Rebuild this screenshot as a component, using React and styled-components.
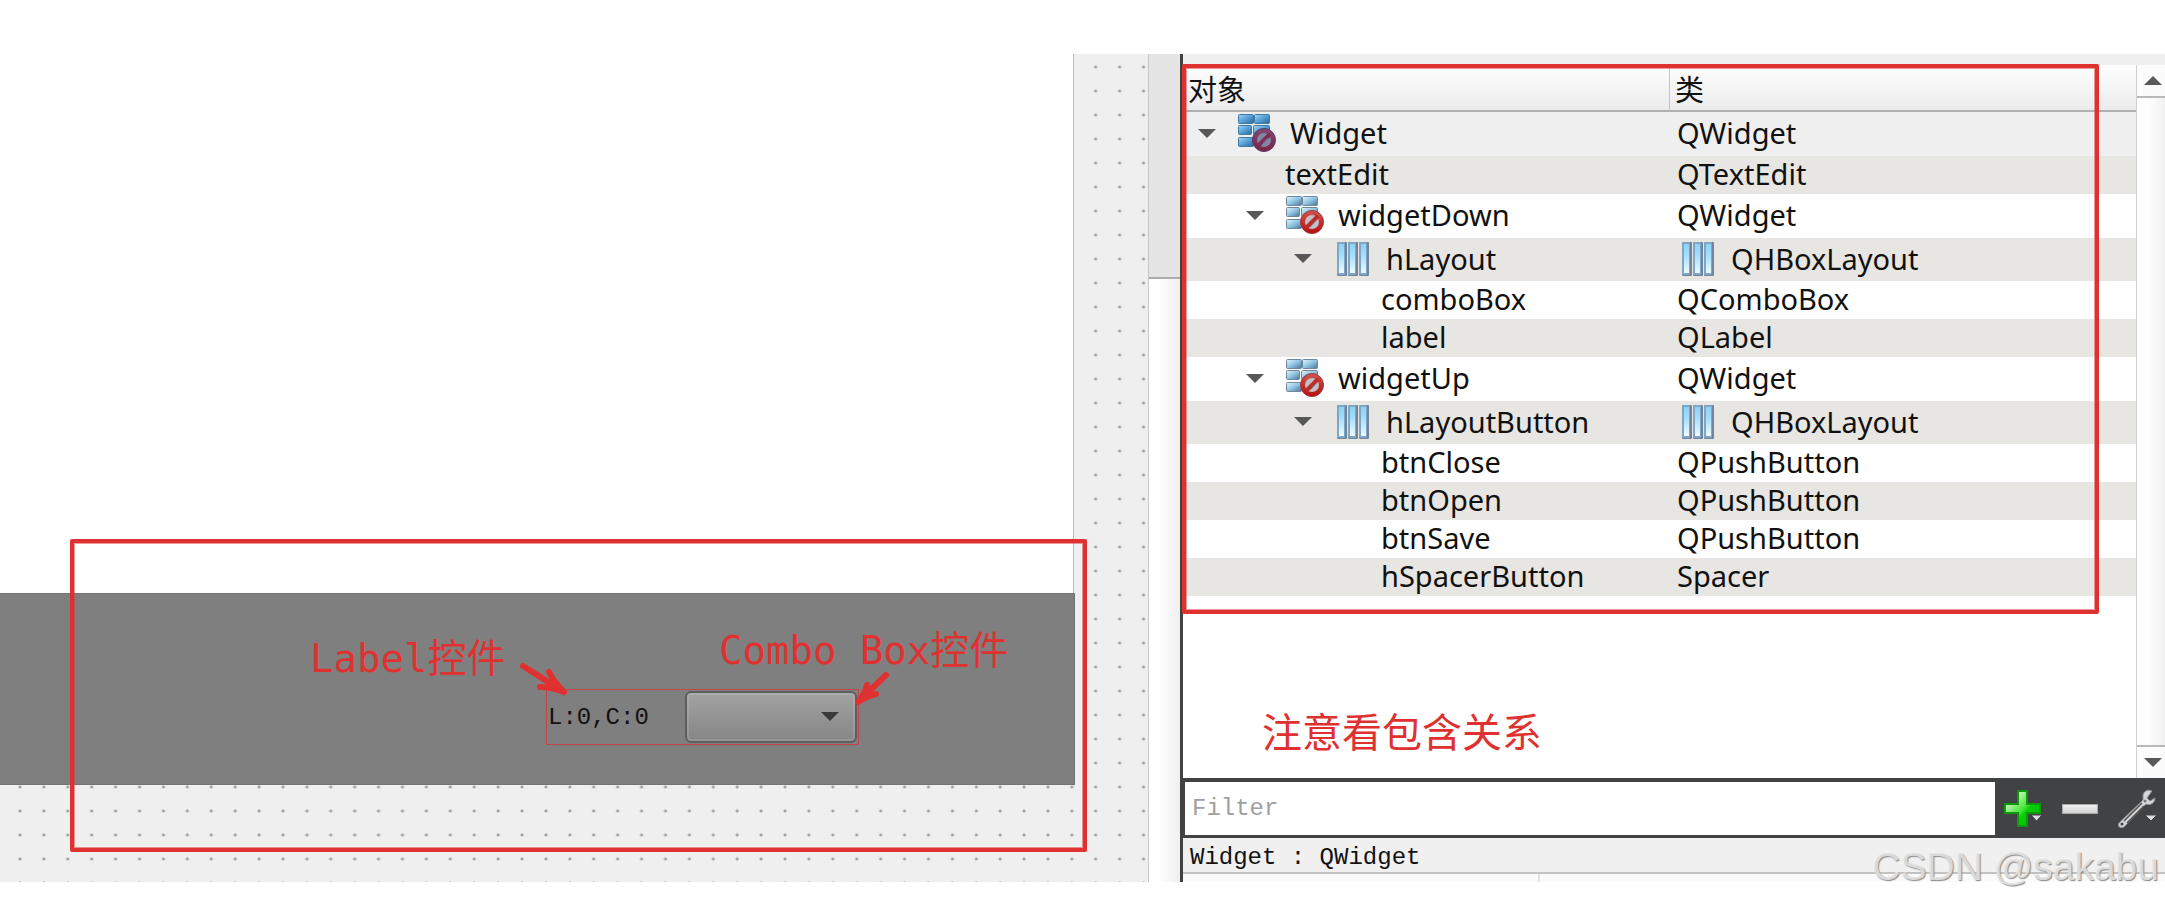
import React from 'react'
import styled, { createGlobalStyle } from 'styled-components'

const red = '#e03131'
const dark = '#404244'

const GlobalStyle = createGlobalStyle`
  * {
    box-sizing: border-box;
  }
  body {
    margin: 0;
    background: #fff;
    font-family: 'Noto Sans', 'Noto Sans CJK SC', sans-serif;
    color: #111;
  }
`

const Page = styled.main`
  display: grid;
  grid-template-columns: minmax(0, 1148fr) 32px 3px minmax(0, 982fr);
  min-height: 100vh;
  padding: 54px 0 23px;
  overflow: hidden;
`

/* ---------- form editor ---------- */

const Canvas = styled.section`
  display: flex;
  flex-direction: column;
  padding: 0 73px 97px 0;
  background-color: #efefef;
  background-image: radial-gradient(circle at 20px 14px, #a2a2a2 1px, transparent 2px);
  background-size: 24px 24px;
  background-position: 0 -1px;
  background-repeat: round repeat;
`
const TextEdit = styled.textarea`
  flex: 1;
  margin: 0 1px 0 0;
  border: 0;
  border-right: 1px solid #bdbdbd;
  background: #fff;
  resize: none;
  outline: none;
`
const WidgetDown = styled.div`
  position: relative;
  display: flex;
  align-items: flex-start;
  height: 192px;
  padding: 95px 0 0 546px;
  border: 1px solid #747474;
  border-left: 0;
  background: #7f7f7f;
`
const HLayout = styled.div`
  display: flex;
  align-items: center;
  justify-content: space-between;
  width: 313px;
  height: 56px;
  padding: 0 1px 0 1px;
  border: 1px solid #c24648;
`
const CursorLabel = styled.label`
  font: 24px 'Liberation Mono', monospace;
`
const ComboWrapper = styled.div`
  position: relative;
  display: flex;
`
const Combo = styled.select`
  appearance: none;
  width: 172px;
  height: 52px;
  border: 2px solid #5e5e5e;
  border-radius: 6px;
  background: linear-gradient(#a2a2a2, #868686);
  box-shadow: inset 0 0 0 2px rgba(255, 255, 255, 0.12);
`
const ComboArrow = styled.span`
  position: absolute;
  right: 18px;
  top: 21px;
  display: flex;
  pointer-events: none;
`

/* ---------- scroll bars ---------- */

const FormScrollBar = styled.div`
  border-left: 1px solid #c6c6c6;
  background: linear-gradient(90deg, #fefefe 30%, #efefef);
`
const FormThumb = styled.div`
  height: 225px;
  border-bottom: 2px solid #acacac;
  background: #e5e5e5;
`
const Splitter = styled.div`
  background: ${dark};
`
const TreeScrollBar = styled.div`
  display: flex;
  flex-direction: column;
  justify-content: space-between;
  width: 29px;
  border-left: 1px solid #cfcfcf;
  background: linear-gradient(90deg, #fefefe 40%, #f1f1f1);
`
const ScrollButton = styled.button`
  display: flex;
  align-items: center;
  justify-content: center;
  height: 33px;
  padding: 0 0 0 4px;
  border: 0 solid #b8b8b8;
  border-bottom-width: ${props => (props.$up ? '2px' : 0)};
  border-top-width: ${props => (props.$up ? 0 : '2px')};
  background: #fbfbfb;
`

/* ---------- object inspector ---------- */

const Inspector = styled.section`
  display: flex;
  flex-direction: column;
  background: #f0f0f0;
`
const TreeView = styled.div`
  flex: 1;
  display: flex;
  margin-top: 11px;
  background: #fff;
`
const TreeBody = styled.div`
  flex: 1;
  min-width: 0;
`
const TreeFrame = styled.div`
  position: relative;
`
const Tree = styled.table`
  width: 100%;
  table-layout: fixed;
  border-collapse: separate;
  border-spacing: 0;
  font-size: 29px;
  line-height: 36px;
`
const HeadCell = styled.th`
  width: ${props => props.$width};
  height: 47px;
  padding: 4px 5px 0;
  border-bottom: 2px solid #b0b0b0;
  border-right: ${props => (props.$divider ? '1px solid #c4c4c4' : 0)};
  background: linear-gradient(#fefefe, #ebebeb);
  font-weight: 400;
  text-align: left;
`
const Row = styled.tr`
  height: ${props => props.$height}px;
  background: ${props => props.$background};
`
const Cell = styled.td`
  padding: 0 0 2px;
`
const NameCell = styled.div`
  display: flex;
  align-items: center;
  padding-left: ${props => props.$depth * 48}px;
`
const ClassCell = styled.div`
  display: flex;
  align-items: center;
  padding-left: 7px;
`
const ArrowSlot = styled.span`
  display: flex;
  justify-content: center;
  width: 48px;
`
const IconSlot = styled.span`
  display: flex;
  margin: 0 14px 0 ${props => (props.$tight ? 2 : 7)}px;
`
const LeafName = styled.span`
  padding-left: 54px;
`

const FilterBar = styled.div`
  display: flex;
  height: 60px;
  padding: 4px 0 3px 2px;
  background: ${dark};
`
const FilterInput = styled.input`
  flex: 1;
  min-width: 0;
  padding: 0 7px;
  border: 0;
  outline: none;
  background: #fff;
  font: 24px 'Liberation Mono', monospace;

  &::placeholder {
    color: #a0a0a0;
    opacity: 1;
  }
`
const Tools = styled.div`
  display: flex;
  width: 170px;
`
const ToolButton = styled.button`
  flex: 1;
  display: flex;
  align-items: center;
  justify-content: center;
  padding: 0;
  border: 0;
  background: transparent;
`
const Selection = styled.div`
  height: 36px;
  padding: 0 7px;
  border-bottom: 2px solid #c2c2c2;
  font: 24px/40px 'Liberation Mono', monospace;
`
const PropertyHead = styled.div`
  display: grid;
  grid-template-columns: 357px 1fr;
  height: 8px;
  background: #fafafa;
`
const PropertyColumn = styled.span`
  border-right: 2px solid #e2e2e2;
`

/* ---------- red notes over the window ---------- */

const Frame = styled.div`
  position: absolute;
  inset: ${props => props.$inset};
  border: 4px solid ${red};
  border-radius: 2px;
  box-shadow: inset 0 0 0 1px rgba(224, 49, 49, 0.5);
  pointer-events: none;
`
const Note = styled.span`
  position: absolute;
  left: ${props => props.$left}px;
  top: ${props => props.$top}px;
  color: ${red};
  font: 39px/48px 'DejaVu Sans Mono', 'Noto Sans CJK SC', monospace;
  white-space: pre;
`
const Remark = styled.p`
  margin: 104px 0 0 79px;
  color: ${red};
  font: 40px/60px 'Noto Sans CJK SC', sans-serif;
`
const NoteArrow = styled.svg`
  position: absolute;
  left: ${props => props.$left}px;
  top: ${props => props.$top}px;
  fill: none;
  stroke: ${red};
  stroke-width: 6;
  stroke-linecap: round;
  stroke-linejoin: round;
`
const Watermark = styled.span`
  position: absolute;
  right: 6px;
  bottom: -9px;
  color: rgba(228, 228, 228, 0.9);
  font: 39px/48px 'Liberation Sans', sans-serif;
  text-shadow: 1px 1px 1px #8a8a8a;
  white-space: nowrap;
`
const Footer = styled.div`
  position: relative;
`

/* ---------- icons ---------- */

const Triangle = ({ up, width = 18, color = '#585858' }) => (
  <svg width={width} height={width / 2} viewBox="0 0 18 9">
    <path d={up ? 'M0 9 9 0l9 9z' : 'M0 0h18L9 9z'} fill={color} />
  </svg>
)

const GradientDefs = styled.svg`
  position: absolute;
`

const Gradients = () => (
  <GradientDefs width="0" height="0" aria-hidden="true">
    <defs>
      <linearGradient id="brick" x2="1" y2="1">
        <stop offset="0" stopColor="#e4f5fd" />
        <stop offset=".5" stopColor="#8fc4e2" />
        <stop offset="1" stopColor="#4d7391" />
      </linearGradient>
      <linearGradient id="brickActive" x2="1" y2="1">
        <stop offset="0" stopColor="#a5d6f6" />
        <stop offset=".5" stopColor="#559fd4" />
        <stop offset="1" stopColor="#2d6698" />
      </linearGradient>
      <linearGradient id="stop" x2="0" y2="1">
        <stop offset="0" stopColor="#cf5552" />
        <stop offset="1" stopColor="#b80f10" />
      </linearGradient>
      <linearGradient id="stopActive" x2="0" y2="1">
        <stop offset="0" stopColor="#7f4b74" />
        <stop offset="1" stopColor="#7c2146" />
      </linearGradient>
      <linearGradient id="bar" x2="0" y2="1">
        <stop offset="0" stopColor="#8ed2f5" />
        <stop offset=".35" stopColor="#a0ddfa" />
        <stop offset="1" stopColor="#eefaff" />
      </linearGradient>
      <linearGradient id="plus" x2="1" y2="1">
        <stop offset=".2" stopColor="#c9f8bd" />
        <stop offset=".5" stopColor="#4be53b" />
        <stop offset=".6" stopColor="#06cf06" />
        <stop offset="1" stopColor="#00b800" />
      </linearGradient>
      <linearGradient id="minus" x2="0" y2="1">
        <stop offset="0" stopColor="#f4f4f4" />
        <stop offset="1" stopColor="#cfcfcf" />
      </linearGradient>
    </defs>
  </GradientDefs>
)

const WidgetIcon = ({ active }) => {
  const suffix = active ? 'Active' : ''
  return (
    <svg width="38" height="38" viewBox="0 0 38 38">
      <g fill={`url(#brick${suffix})`} stroke={active ? '#3d79a8' : '#6f86a0'}>
        <rect x=".5" y=".5" width="15" height="9" rx="1" />
        <rect x="16.5" y=".5" width="15" height="9" rx="1" />
        <rect x=".5" y="11.5" width="13" height="9" rx="1" />
        <rect x="15.5" y="11.5" width="16" height="9" rx="1" />
        <rect x=".5" y="23.5" width="15" height="9" rx="1" />
      </g>
      <circle cx="26" cy="26" r="11.5" fill={`url(#stop${suffix})`} stroke={active ? '#5b3a68' : '#9c3a3c'} />
      <circle cx="26" cy="26" r="7" fill={active ? '#8187a5' : '#c3bfc4'} />
      <path d="M20 32 32 20" stroke={active ? '#7b2d52' : '#c02b2a'} strokeWidth="4" />
      <path d="M24.5 30.5l5-6" stroke={active ? '#8187a5' : '#5e6a7c'} strokeWidth="1" />
    </svg>
  )
}

const LayoutIcon = () => (
  <svg width="38" height="36" viewBox="0 0 38 36">
    {[3, 14, 25].map(x => (
      <g key={x}>
        <rect x={x} y="1" width="10" height="34" rx="1" fill="#71839d" />
        <rect x={x} y="1" width="8" height="33" rx="1" fill="#7fa6c4" />
        <rect x={x + 2} y="3" width="5" height="29" fill="url(#bar)" />
      </g>
    ))}
  </svg>
)

const PlusIcon = () => (
  <svg width="38" height="38" viewBox="0 0 38 38">
    <path d="M14 1h9v13h13v9H23v13h-9V23H1v-9h13z" fill="url(#plus)" stroke="#0a9a0a" strokeWidth="2" />
    <path d="M27 25h11l-5.5 6z" fill="#dcdcdc" stroke="#404244" strokeWidth="1" />
  </svg>
)

const MinusIcon = () => (
  <svg width="38" height="38" viewBox="0 0 38 38">
    <rect x="1.5" y="14.5" width="35" height="9" fill="url(#minus)" stroke="#a8a8a8" />
  </svg>
)

const WrenchIcon = () => (
  <svg width="40" height="40" viewBox="0 0 40 40">
    <path
      d="M35 2c-4-2-9 0-9 5l0 4L2 34c-2 3 1 6 5 4L29 15c4 2 9-1 9-6l-5 3-3-3z"
      fill="#d4d4d4"
      stroke="#8c8c8c"
    />
    <path d="M7 32 25 14M10 34 27 17" stroke="#4d4d4d" strokeWidth="1.5" fill="none" />
    <circle cx="5" cy="35" r="1.5" fill="#404244" />
    <circle cx="28" cy="12" r="1.5" fill="#777" />
    <path d="M28 26h12l-6 6z" fill="#dcdcdc" stroke="#404244" strokeWidth="1" />
  </svg>
)

/* ---------- data ---------- */

const objects = [
  { name: 'Widget', type: 'QWidget', depth: 0, icon: 'widget', active: true },
  { name: 'textEdit', type: 'QTextEdit', depth: 1 },
  { name: 'widgetDown', type: 'QWidget', depth: 1, icon: 'widget' },
  { name: 'hLayout', type: 'QHBoxLayout', depth: 2, icon: 'layout' },
  { name: 'comboBox', type: 'QComboBox', depth: 3 },
  { name: 'label', type: 'QLabel', depth: 3 },
  { name: 'widgetUp', type: 'QWidget', depth: 1, icon: 'widget' },
  { name: 'hLayoutButton', type: 'QHBoxLayout', depth: 2, icon: 'layout' },
  { name: 'btnClose', type: 'QPushButton', depth: 3 },
  { name: 'btnOpen', type: 'QPushButton', depth: 3 },
  { name: 'btnSave', type: 'QPushButton', depth: 3 },
  { name: 'hSpacerButton', type: 'Spacer', depth: 3 },
]

const rowHeights = { widget: 44, layout: 43 }

const rowBackground = (active, index) => {
  if (active) return '#efefef'
  return index % 2 ? '#e8e6e2' : '#fff'
}

const ObjectRow = ({ object, index }) => {
  const { name, type, depth, icon, active } = object

  return (
    <Row $height={rowHeights[icon] || 38} $background={rowBackground(active, index)}>
      <Cell>
        <NameCell $depth={depth}>
          {icon ? (
            <>
              <ArrowSlot>
                <Triangle />
              </ArrowSlot>
              <IconSlot>{icon === 'widget' ? <WidgetIcon active={active} /> : <LayoutIcon />}</IconSlot>
              {name}
            </>
          ) : (
            <LeafName>{name}</LeafName>
          )}
        </NameCell>
      </Cell>
      <Cell>
        <ClassCell>
          {icon === 'layout' && (
            <IconSlot $tight>
              <LayoutIcon />
            </IconSlot>
          )}
          {type}
        </ClassCell>
      </Cell>
    </Row>
  )
}

const FormEditor = () => (
  <Canvas>
    <TextEdit aria-label="textEdit" />
    <WidgetDown>
      <HLayout>
        <CursorLabel htmlFor="comboBox">L:0,C:0</CursorLabel>
        <ComboWrapper>
          <Combo id="comboBox">
            <option value="" />
          </Combo>
          <ComboArrow>
            <Triangle color="#3a3a3a" />
          </ComboArrow>
        </ComboWrapper>
      </HLayout>
      <Frame $inset="-55px -13px -68px 70px" />
      <Note $left={310} $top={41}>
        Label控件
      </Note>
      <Note $left={719} $top={33}>
        Combo Box控件
      </Note>
      <NoteArrow $left={518} $top={66} width="52" height="38">
        <path d="M5 6 46 32M31 12Q36 22 46 32 34 27 22 27" />
      </NoteArrow>
      <NoteArrow $left={853} $top={76} width="40" height="38">
        <path d="M33 5 5 32M14 15Q12 24 5 32 14 26 23 24" />
      </NoteArrow>
    </WidgetDown>
  </Canvas>
)

const ObjectInspector = () => (
  <Inspector>
    <TreeView>
      <TreeBody>
        <TreeFrame>
          <Tree>
            <thead>
              <tr>
                <HeadCell $width="487px" $divider>
                  对象
                </HeadCell>
                <HeadCell $width="auto">类</HeadCell>
              </tr>
            </thead>
            <tbody>
              {objects.map((object, index) => (
                <ObjectRow key={object.name} object={object} index={index} />
              ))}
            </tbody>
          </Tree>
          <Frame $inset="-1px 37px -18px -1px" />
        </TreeFrame>
        <Remark>注意看包含关系</Remark>
      </TreeBody>
      <TreeScrollBar>
        <ScrollButton $up aria-label="Scroll up">
          <Triangle up />
        </ScrollButton>
        <ScrollButton aria-label="Scroll down">
          <Triangle />
        </ScrollButton>
      </TreeScrollBar>
    </TreeView>
    <FilterBar>
      <FilterInput placeholder="Filter" aria-label="Filter" />
      <Tools>
        <ToolButton aria-label="Add">
          <PlusIcon />
        </ToolButton>
        <ToolButton aria-label="Remove">
          <MinusIcon />
        </ToolButton>
        <ToolButton aria-label="Configure">
          <WrenchIcon />
        </ToolButton>
      </Tools>
    </FilterBar>
    <Footer>
      <Selection>Widget : QWidget</Selection>
      <PropertyHead>
        <PropertyColumn />
      </PropertyHead>
      <Watermark>CSDN @sakabu</Watermark>
    </Footer>
  </Inspector>
)

const App = () => (
  <>
    <GlobalStyle />
    <Gradients />
    <Page>
      <FormEditor />
      <FormScrollBar>
        <FormThumb />
      </FormScrollBar>
      <Splitter />
      <ObjectInspector />
    </Page>
  </>
)

export default App
